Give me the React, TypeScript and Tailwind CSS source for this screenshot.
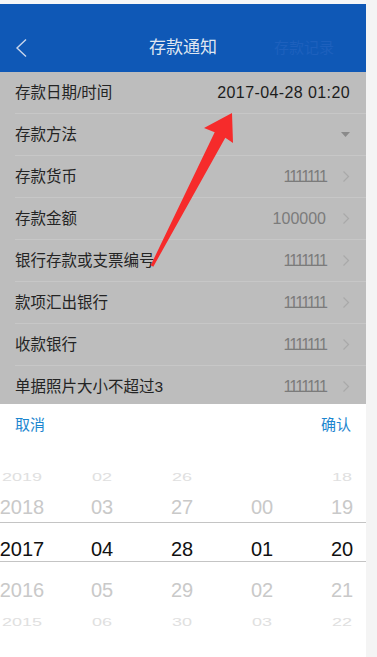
import * as React from 'react';

const rows = [
  { label: '存款日期/时间', value: '2017-04-28 01:20', kind: 'date' },
  { label: '存款方法', value: '', kind: 'select' },
  { label: '存款货币', value: '1111111', kind: 'link' },
  { label: '存款金额', value: '100000', kind: 'link' },
  { label: '银行存款或支票编号', value: '1111111', kind: 'link' },
  { label: '款项汇出银行', value: '1111111', kind: 'link' },
  { label: '收款银行', value: '1111111', kind: 'link' },
  { label: '单据照片大小不超过3', value: '1111111', kind: 'link' }
];

const wheel = [
  ['2019', '02', '26', '', '18'],
  ['2018', '03', '27', '00', '19'],
  ['2017', '04', '28', '01', '20'],
  ['2016', '05', '29', '02', '21'],
  ['2015', '06', '30', '03', '22']
];

const Chevron = () => (
  <svg width="8" height="13" viewBox="0 0 8 13" className="ml-[16px] shrink-0">
    <polyline points="1.5,1.5 6.5,6.5 1.5,11.5" fill="none" stroke="#a9a9a9" strokeWidth="1.2" />
  </svg>
);

const WheelRow = ({ values, tone }: { values: string[]; tone: 'far' | 'near' | 'on' }) => (
  <div className="ml-[-18px] grid w-[400px] grid-cols-[80px_80px_80px_80px_80px]">
    {values.map((v, i) => (
      <div
        key={i}
        className={
          tone === 'on'
            ? 'text-center text-[20px] leading-[24px] text-[#111]'
            : tone === 'near'
            ? 'text-center text-[20px] leading-[24px] text-[#c9c9c9]'
            : 'scale-y-[0.6] text-center text-[18px] leading-[24px] text-[#e0e0e0]'
        }
      >
        {v}
      </div>
    ))}
  </div>
);

export default function App() {
  return (
    <div className="relative flex h-[657px] w-[377px] overflow-hidden bg-[#f4f4f4] font-['Liberation_Sans','Noto_Sans_CJK_SC',sans-serif]">
      <div className="flex w-[366px] flex-col">
        <div className="h-[4px] bg-[#f5f6f8]" />
        <div className="flex h-[68px] flex-col bg-[#0f58b6]">
          <div className="mt-auto grid h-[48px] grid-cols-[1fr_auto_1fr] items-center">
            <div className="pl-[15px]">
              <svg width="13" height="20" viewBox="0 0 13 20">
                <polyline points="11,1.5 2,10 11,18.5" fill="none" stroke="#c9d6ec" strokeWidth="1.4" />
              </svg>
            </div>
            <div className="text-[17px] text-[#dfe6f1]">存款通知</div>
            <div className="pr-[32px] text-right text-[15px] text-[#1d60bd]">存款记录</div>
          </div>
        </div>

        <div className="h-[332px] overflow-hidden bg-[#bdbdbd]">
          {rows.map(r => (
            <div key={r.label} className="ml-[15px] flex h-[42px] items-center border-b border-[#c7c7c7] pr-[16px]">
              <span className="flex-1 text-[15.5px] text-[#242424]">{r.label}</span>
              {r.kind === 'date' && (
                <span className="text-[16px] tracking-[0.4px] text-[#1c1c1c]">{r.value}</span>
              )}
              {r.kind === 'select' && (
                <svg width="9" height="5" viewBox="0 0 9 5">
                  <polygon points="0,0 9,0 4.5,5" fill="#8a8a8a" />
                </svg>
              )}
              {r.kind === 'link' && (
                <>
                  <span
                    className={
                      r.value === '1111111'
                        ? 'text-[16px] tracking-[-1.8px] text-[#7b7b7b]'
                        : 'text-[16px] text-[#7b7b7b]'
                    }
                  >
                    {r.value}
                  </span>
                  <Chevron />
                </>
              )}
            </div>
          ))}
        </div>

        <div className="flex flex-1 flex-col overflow-hidden bg-white">
          <div className="flex h-[42px] items-center justify-between px-[15px] text-[15px] text-[#1c86cf]">
            <span>取消</span>
            <span>确认</span>
          </div>
          <div className="h-[16px]" />
          <div className="flex h-[30px] items-center">
            <WheelRow values={wheel[0]} tone="far" />
          </div>
          <div className="flex h-[30px] items-center">
            <WheelRow values={wheel[1]} tone="near" />
          </div>
          <div className="flex h-[40px] items-center border-y border-[#c4c4c4] pt-[13px]">
            <WheelRow values={wheel[2]} tone="on" />
          </div>
          <div className="mt-[12px] flex h-[32px] items-center">
            <WheelRow values={wheel[3]} tone="near" />
          </div>
          <div className="flex h-[32px] items-center">
            <WheelRow values={wheel[4]} tone="far" />
          </div>
        </div>
      </div>

      <svg className="pointer-events-none absolute left-0 top-0" width="377" height="657" viewBox="0 0 377 657">
        <polygon
          points="232,113 204,128 214.7,132.2 150.7,265.3 153.3,266.7 225.3,137.8 233,143"
          fill="#f62b2b"
        />
      </svg>
    </div>
  );
}
